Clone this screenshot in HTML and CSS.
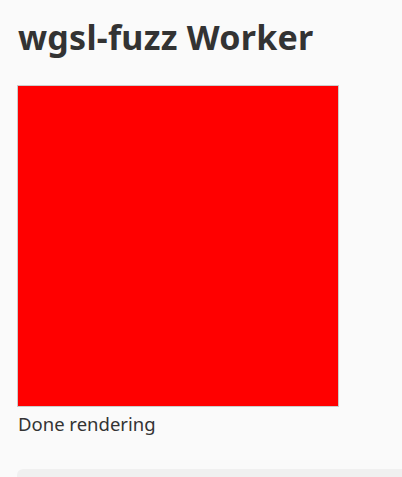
FILE: index.html
```html
<!DOCTYPE html>
<html>
<head>
<meta charset="utf-8">
<link rel="stylesheet" href="styles.css">
</head>
<body>
<main class="page">
  <h1 class="title">wgsl-fuzz Worker</h1>
  <div class="canvas"></div>
  <p class="status">Done rendering</p>
  <div class="log"></div>
</main>
</body>
</html>
```
FILE: styles.css
```css
html, body {
  margin: 0;
  padding: 0;
  background: #fafafa;
}
.page {
  padding: 0 0 0 17px;
  overflow-x: clip;
  font-family: "Noto Sans", "Open Sans", sans-serif;
  color: #333;
}
.title {
  margin: 0;
  padding-top: 14px;
  padding-left: 1px;
  font-size: 34px;
  letter-spacing: 0.25px;
  font-weight: 700;
  line-height: 46px;
}
.canvas {
  margin-top: 25px;
  width: 320px;
  height: 320px;
  background: #ff0000;
  border: 1px solid #cccccc;
}
.status {
  margin: 4px 0 0 1px;
  font-size: 18.5px;
  line-height: 26px;
}
.log {
  margin-top: 32px;
  margin-right: -20px;
  height: 40px;
  background: #f0f0f0;
  border-radius: 6px;
}
```
